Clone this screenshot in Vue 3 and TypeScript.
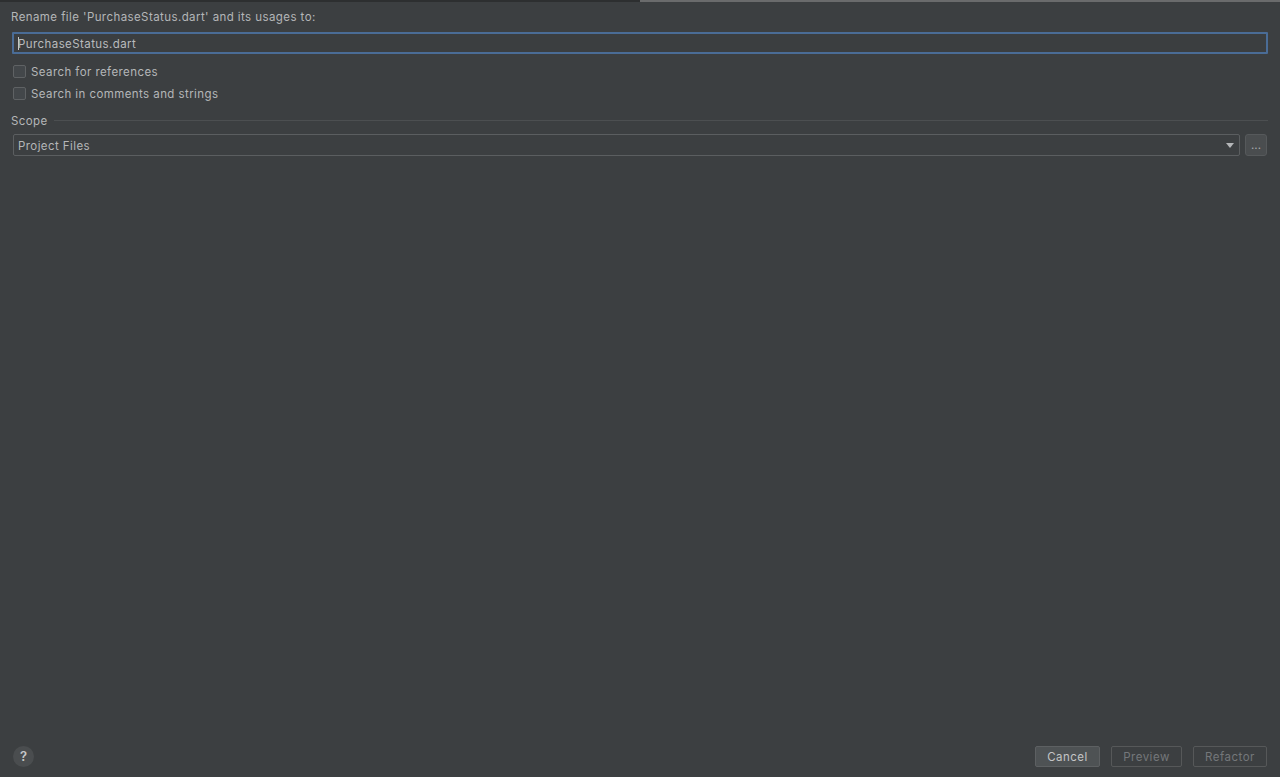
<script setup lang="ts">
const title: string = "Rename file 'PurchaseStatus.dart' and its usages to:";
const options: string[] = ["Search for references", "Search in comments and strings"];
</script>

<template>
  <div class="dialog">
    <div class="progress"><div class="progress-left"></div><div class="progress-right"></div></div>
    <main class="body">
      <div class="title">{{ title }}</div>
      <div class="input"><span class="caret"></span><span class="nudge">PurchaseStatus.dart</span></div>
      <div class="options">
        <label v-for="o in options" :key="o" class="option"><span class="check"></span><span class="nudge">{{ o }}</span></label>
      </div>
      <div class="scope-head"><span class="nudge">Scope</span><span class="rule"></span></div>
      <div class="scope-row">
        <div class="select">
          <span class="nudge">Project Files</span>
          <svg class="arrow" width="8" height="5" viewBox="0 0 8 5"><path d="M0 0H8L4 5Z" fill="#b4b6b8" /></svg>
        </div>
        <button class="more">...</button>
      </div>
    </main>
    <footer class="footer">
      <div class="help">?</div>
      <div class="buttons">
        <button class="btn primary">Cancel</button>
        <button class="btn disabled preview">Preview</button>
        <button class="btn disabled refactor">Refactor</button>
      </div>
    </footer>
  </div>
</template>

<style>
html, body { margin: 0; background: #3c3f41; }
</style>

<style scoped>
.dialog {
  width: 1280px;
  height: 777px;
  background: #3c3f41;
  color: #b4b6b8;
  font-family: Inter, "Liberation Sans", sans-serif;
  font-size: 11.5px;
  letter-spacing: 0.42px;
  display: flex;
  flex-direction: column;
  overflow: hidden;
}
.nudge { padding-top: 2px; }
.progress { display: flex; height: 2px; flex: none; }
.progress-left { width: 640px; background: #2d2f30; }
.progress-right { flex: 1; background: #6a6b6c; }
.body { flex: 1; display: flex; flex-direction: column; padding: 8px 12px 0 11px; }
.title { height: 14px; line-height: 14px; }
.input {
  margin: 8px 0 0 1px;
  height: 18px;
  line-height: 18px;
  padding-left: 4px;
  border: 2px solid #4a6c96;
  border-radius: 1px;
  background: #3b3e40;
  display: flex;
  align-items: center;
  color: #b9bbbd;
}
.caret { width: 1px; height: 13px; background: #c8c8c8; margin-right: -1px; }
.options { display: flex; flex-direction: column; gap: 8px; margin: 10px 0 0 2px; }
.option { display: flex; align-items: center; gap: 5px; height: 14px; line-height: 14px; }
.check {
  width: 11px;
  height: 11px;
  border: 1px solid #5f6264;
  border-radius: 2px;
  background: #43474a;
}
.scope-head { display: flex; align-items: center; gap: 6px; margin-top: 13px; height: 14px; line-height: 14px; }
.rule { flex: 1; height: 1px; background: #4c4f51; }
.scope-row { display: flex; gap: 5px; margin: 7px 1px 0 2px; }
.select {
  flex: 1;
  height: 20px;
  line-height: 20px;
  border: 1px solid #5b5e60;
  border-radius: 2px;
  padding: 0 5px 0 4px;
  display: flex;
  justify-content: space-between;
  align-items: center;
}
.more {
  width: 22px;
  height: 22px;
  padding: 0;
  border: 1px solid #56595b;
  border-radius: 3px;
  background: #4a4d4f;
  color: #a8aaac;
  font: inherit;
  letter-spacing: 0;
}
.footer {
  flex: none;
  height: 22px;
  padding: 0 13px 10px 13px;
  display: flex;
  align-items: center;
  justify-content: space-between;
}
.help {
  width: 21px;
  height: 21px;
  border-radius: 50%;
  background: #4a4d4f;
  color: #c6c7c8;
  text-align: center;
  line-height: 21px;
  font-weight: 600;
  font-size: 13px;
  letter-spacing: 0;
}
.buttons { display: flex; gap: 11px; }
.btn {
  height: 21px;
  padding: 2px 0 0;
  border-radius: 2px;
  font: inherit;
  letter-spacing: 0.5px;
  background: transparent;
}
.primary { width: 65px; background: #4e5254; border: 1px solid #5d6062; color: #c4c5c6; }
.disabled { border: 1px solid #565859; color: #74777a; }
.preview { width: 71px; }
.refactor { width: 74px; }
</style>
